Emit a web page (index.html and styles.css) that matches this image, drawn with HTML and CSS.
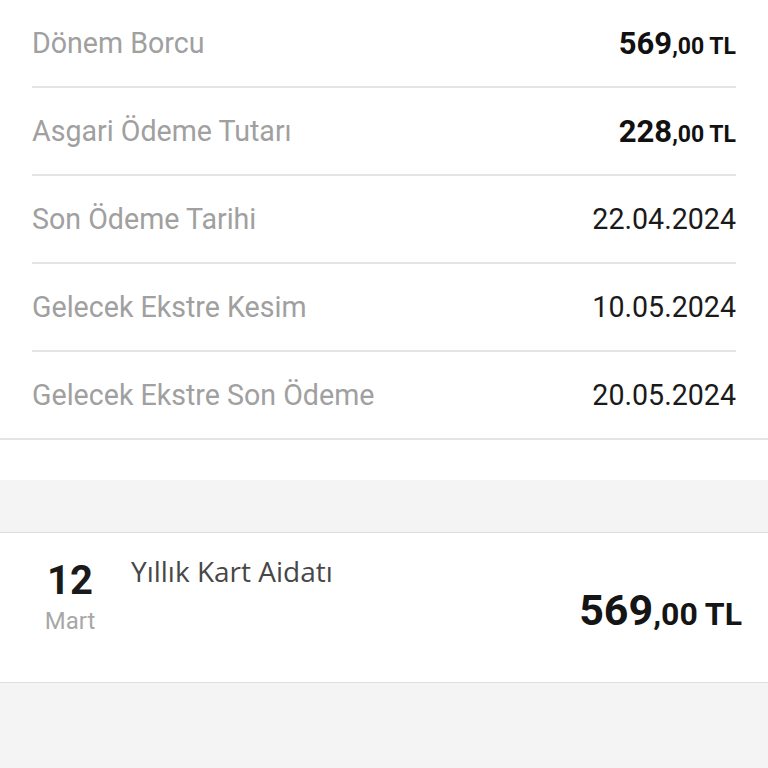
FILE: index.html
```html
<!DOCTYPE html>
<html lang="tr">
<head>
<meta charset="utf-8">
<link rel="stylesheet" href="styles.css">
</head>
<body>
<section class="summary">
  <div class="row">
    <span class="label">Dönem Borcu</span>
    <span class="amount"><span class="int">569</span><span class="dec">,00 TL</span></span>
  </div>
  <div class="row">
    <span class="label">Asgari Ödeme Tutarı</span>
    <span class="amount"><span class="int">228</span><span class="dec">,00 TL</span></span>
  </div>
  <div class="row">
    <span class="label">Son Ödeme Tarihi</span>
    <span class="value">22.04.2024</span>
  </div>
  <div class="row">
    <span class="label">Gelecek Ekstre Kesim</span>
    <span class="value">10.05.2024</span>
  </div>
  <div class="row">
    <span class="label">Gelecek Ekstre Son Ödeme</span>
    <span class="value">20.05.2024</span>
  </div>
</section>
<div class="spacer"></div>
<div class="band"></div>
<section class="txn">
  <div class="date">
    <div class="day">12</div>
    <div class="month">Mart</div>
  </div>
  <div class="info">
    <div class="title">Yıllık Kart Aidatı</div>
    <div class="big-amount"><span class="int">569</span><span class="dec">,00 TL</span></div>
  </div>
</section>
<div class="rest"></div>
</body>
</html>
```
FILE: styles.css
```css
html, body {
  margin: 0;
  padding: 0;
  background: #f4f4f4;
  font-family: Roboto, "Liberation Sans", sans-serif;
}
.summary {
  background: #ffffff;
  padding: 0 32px;
  border-bottom: 2px solid #e4e4e4;
}
.row {
  height: 86px;
  display: flex;
  align-items: center;
  justify-content: space-between;
  border-bottom: 2px solid #e4e4e4;
}
.row:last-child {
  border-bottom: none;
}
.label {
  font-size: 28.6px;
  color: #a0a0a0;
}
.value {
  font-size: 28.6px;
  color: #1a1a1a;
}
.amount {
  color: #111111;
  font-weight: 700;
}
.amount .int {
  font-size: 31px;
}
.amount .dec {
  font-size: 23px;
}
.spacer {
  height: 40px;
  background: #ffffff;
}
.band {
  height: 52px;
  background: #f4f4f4;
}
.txn {
  box-sizing: border-box;
  height: 151px;
  background: #ffffff;
  border-top: 1px solid #dedede;
  border-bottom: 1px solid #dedede;
  display: flex;
  align-items: flex-start;
  padding: 25px 26px 0 44px;
}
.date {
  width: 52px;
  text-align: center;
  display: flex;
  flex-direction: column;
  gap: 3px;
}
.day {
  font-size: 40px;
  line-height: 46px;
  font-weight: 700;
  color: #1a1a1a;
}
.month {
  font-size: 24px;
  line-height: 28px;
  color: #a8a8a8;
}
.info {
  flex: 1;
  margin-left: 35px;
  display: flex;
  flex-direction: column;
}
.title {
  font-family: "Open Sans", "Noto Sans", sans-serif;
  font-size: 28px;
  line-height: 24px;
  margin-top: 1px;
  color: #474747;
}
.big-amount {
  align-self: flex-end;
  margin-top: 3px;
  line-height: 48px;
  font-weight: 700;
  color: #151515;
}
.big-amount .int {
  font-size: 43px;
}
.big-amount .dec {
  font-size: 32px;
}
.rest {
  height: 100px;
  background: #f4f4f4;
}
```
